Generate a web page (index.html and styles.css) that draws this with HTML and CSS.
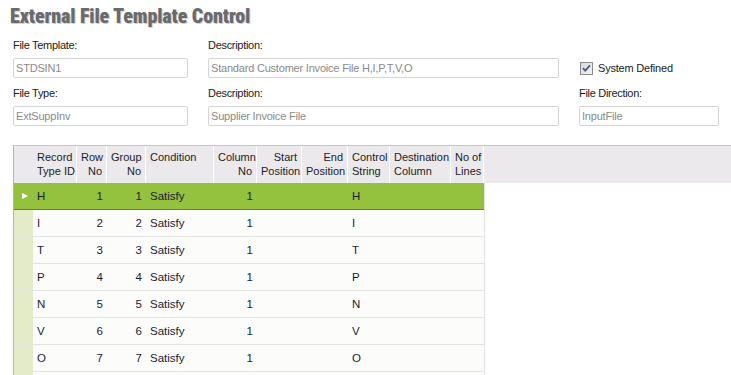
FILE: index.html
```html
<!DOCTYPE html>
<html>
<head>
<meta charset="utf-8">
<link rel="stylesheet" href="styles.css">
</head>
<body>
<div class="page">
  <h1 class="title">External File Template Control</h1>
  <div class="form">
    <div class="field">
      <div class="label">File Template:</div>
      <div class="input">STDSIN1</div>
    </div>
    <div class="field">
      <div class="label">Description:</div>
      <div class="input">Standard Customer Invoice File H,I,P,T,V,O</div>
    </div>
    <div class="field field-check">
      <div class="checkrow">
        <svg class="checkbox" width="13" height="13" viewBox="0 0 13 13">
          <defs>
            <linearGradient id="cb" x1="0" y1="0" x2="1" y2="1">
              <stop offset="0" stop-color="#d8d8d8"/>
              <stop offset="1" stop-color="#f4f4f4"/>
            </linearGradient>
          </defs>
          <rect x="0.5" y="0.5" width="12" height="12" fill="url(#cb)" stroke="#8c8c8c"/>
          <path d="M3 6.2 L5.2 8.6 L10 3.4" fill="none" stroke="#4b5b86" stroke-width="1.8"/>
        </svg>
        <span>System Defined</span>
      </div>
    </div>
    <div class="field">
      <div class="label">File Type:</div>
      <div class="input">ExtSuppInv</div>
    </div>
    <div class="field">
      <div class="label">Description:</div>
      <div class="input">Supplier Invoice File</div>
    </div>
    <div class="field">
      <div class="label">File Direction:</div>
      <div class="input">InputFile</div>
    </div>
  </div>

  <div class="grid">
    <div class="head">
      <div class="hc gut"></div>
      <div class="hc">Record<br>Type ID</div>
      <div class="hc r">Row<br>No</div>
      <div class="hc r">Group<br>No</div>
      <div class="hc">Condition</div>
      <div class="hc r">Column<br>No</div>
      <div class="hc r">Start<br>Position</div>
      <div class="hc r">End<br>Position</div>
      <div class="hc">Control<br>String</div>
      <div class="hc">Destination<br>Column</div>
      <div class="hc">No of<br>Lines</div>
    </div>
    <div class="rows">
      <div class="row sel">
        <div class="c gut"><span class="arrow"></span></div>
        <div class="c">H</div><div class="c r">1</div><div class="c r">1</div><div class="c">Satisfy</div>
        <div class="c r">1</div><div class="c"></div><div class="c"></div><div class="c">H</div><div class="c"></div><div class="c"></div>
      </div>
      <div class="row">
        <div class="c gut"></div>
        <div class="c">I</div><div class="c r">2</div><div class="c r">2</div><div class="c">Satisfy</div>
        <div class="c r">1</div><div class="c"></div><div class="c"></div><div class="c">I</div><div class="c"></div><div class="c"></div>
      </div>
      <div class="row">
        <div class="c gut"></div>
        <div class="c">T</div><div class="c r">3</div><div class="c r">3</div><div class="c">Satisfy</div>
        <div class="c r">1</div><div class="c"></div><div class="c"></div><div class="c">T</div><div class="c"></div><div class="c"></div>
      </div>
      <div class="row">
        <div class="c gut"></div>
        <div class="c">P</div><div class="c r">4</div><div class="c r">4</div><div class="c">Satisfy</div>
        <div class="c r">1</div><div class="c"></div><div class="c"></div><div class="c">P</div><div class="c"></div><div class="c"></div>
      </div>
      <div class="row">
        <div class="c gut"></div>
        <div class="c">N</div><div class="c r">5</div><div class="c r">5</div><div class="c">Satisfy</div>
        <div class="c r">1</div><div class="c"></div><div class="c"></div><div class="c">N</div><div class="c"></div><div class="c"></div>
      </div>
      <div class="row">
        <div class="c gut"></div>
        <div class="c">V</div><div class="c r">6</div><div class="c r">6</div><div class="c">Satisfy</div>
        <div class="c r">1</div><div class="c"></div><div class="c"></div><div class="c">V</div><div class="c"></div><div class="c"></div>
      </div>
      <div class="row">
        <div class="c gut"></div>
        <div class="c">O</div><div class="c r">7</div><div class="c r">7</div><div class="c">Satisfy</div>
        <div class="c r">1</div><div class="c"></div><div class="c"></div><div class="c">O</div><div class="c"></div><div class="c"></div>
      </div>
      <div class="row">
        <div class="c gut"></div>
        <div class="c"></div><div class="c"></div><div class="c"></div><div class="c"></div>
        <div class="c"></div><div class="c"></div><div class="c"></div><div class="c"></div><div class="c"></div><div class="c"></div>
      </div>
    </div>
  </div>
</div>
</body>
</html>
```

FILE: styles.css
```css
* { box-sizing: border-box; }
html, body { margin: 0; padding: 0; background: #ffffff; overflow: hidden; }
body {
  font-family: "Liberation Sans", Arial, sans-serif;
  font-size: 11px;
  color: #1a1a1a;
}
.page {
  padding: 5px 0 0 13px;
  height: 375px;
  overflow: hidden;
}
.title {
  margin: 0 0 11px -3px;
  height: 22px;
  line-height: 22px;
  font-family: "Liberation Sans Narrow", "Roboto Condensed", "DejaVu Sans Condensed", sans-serif;
  font-stretch: condensed;
  font-weight: 900;
  font-size: 20px;
  letter-spacing: -0.1px;
  color: #6a6a6a;
  text-shadow: 1px 1px 0 #cfcfcf;
  white-space: nowrap;
}
.form {
  display: grid;
  grid-template-columns: 175px 351px 140px;
  column-gap: 20px;
  row-gap: 8px;
}
.field { display: flex; flex-direction: column; }
.label {
  height: 14px;
  line-height: 14px;
  margin-bottom: 6px;
  color: #1a1a1a;
  letter-spacing: -0.3px;
  white-space: nowrap;
}
.input {
  height: 20px;
  line-height: 18px;
  border: 1px solid #d4d4d4;
  border-radius: 2px;
  padding: 0 2px;
  color: #8a8a8a;
  letter-spacing: -0.2px;
  white-space: nowrap;
  overflow: hidden;
}
.field-check { padding-top: 20px; padding-left: 1px; }
.checkrow {
  height: 20px;
  display: flex;
  align-items: center;
  gap: 5px;
  color: #1a1a1a;
  letter-spacing: -0.2px;
}
.checkbox { display: block; flex: none; }

.grid {
  margin-top: 19px;
  border-left: 1px solid #b3b3b3;
}
.head, .row {
  display: grid;
  grid-template-columns: 19px 44px 30px 39px 68px 43px 45px 46px 42px 61px 33px;
}
.head {
  background: #ebe9ec;
  border-top: 1px solid #c6c6c6;
  height: 38px;
}
.hc {
  padding: 4px 4px 0 4px;
  line-height: 14px;
  border-right: 1px solid #ffffff;
  color: #1c1c1c;
  white-space: nowrap;
}
.hc.gut { border-right: none; }
.hc.r { text-align: right; }
.rows { width: 471px; border-right: 1px solid #e2e2e2; }
.row {
  height: 27px;
  background: #fcfdfb;
  border-bottom: 1px solid #e4e4e4;
}
.row .c {
  line-height: 26px;
  padding: 0 4px;
  color: #1b1b30;
  font-size: 11.5px;
  white-space: nowrap;
}
.row .c.r { text-align: right; }
.row .c.gut { background: #e3ebc7; padding: 0; }
.row.sel {
  background: #94c23e;
  border-bottom: 1px solid #5f8a22;
}
.row.sel .c.gut {
  background: #94c23e;
  display: flex;
  align-items: center;
  justify-content: center;
}
.arrow {
  width: 0;
  height: 0;
  border-top: 3.5px solid transparent;
  border-bottom: 3.5px solid transparent;
  border-left: 6px solid #ffffff;
  margin-left: 2px;
}
```
